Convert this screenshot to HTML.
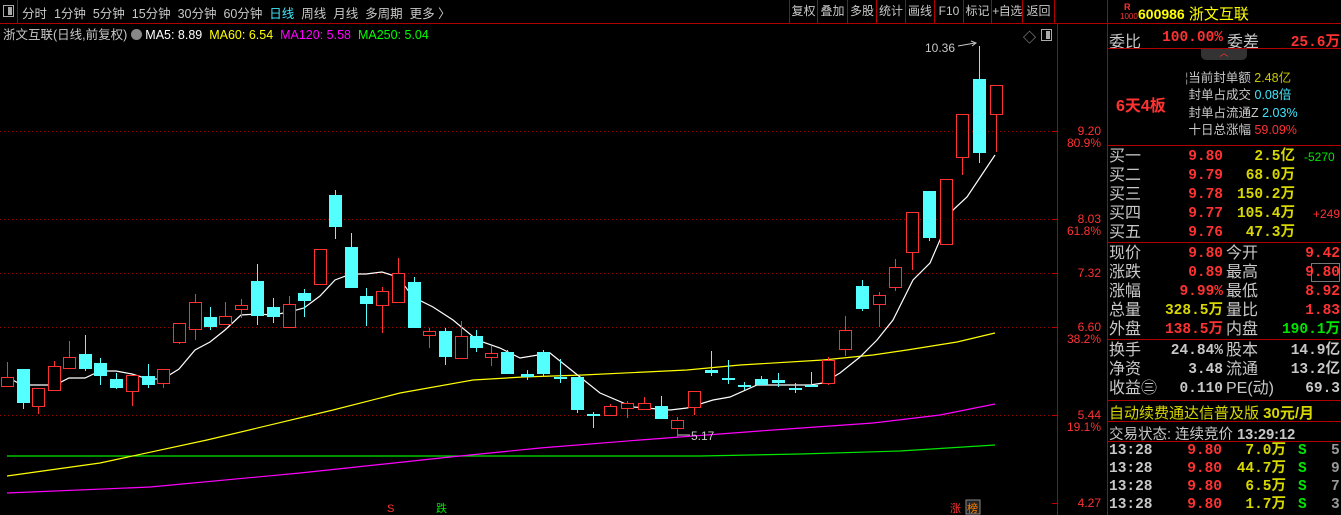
<!DOCTYPE html>
<html><head><meta charset="utf-8"><style>
*{margin:0;padding:0;box-sizing:border-box}
body{width:1341px;height:515px;background:#000;overflow:hidden;position:relative;font-family:"Liberation Sans","Noto Sans CJK SC",sans-serif;color:#c8c8c8}
.a{position:absolute;white-space:nowrap}
.tb{top:3px;font-size:12.5px;color:#c8c8c8}
.btn{position:absolute;top:0;height:23px;border-left:1px solid #b00000;font-size:12px;color:#c8c8c8;text-align:center;line-height:23px;white-space:nowrap;overflow:hidden}
.hl{position:absolute;left:1107px;width:234px;height:1px;background:#b00000}
.r{color:#ff3232}.y{color:#d8d800}.c{color:#40e8ff}.g{color:#00e600}.w{color:#c8c8c8}
.lb{font-size:16px;color:#c8c8c8}
.num{font-size:14.5px;font-weight:bold;font-family:"Liberation Mono","Noto Sans CJK SC",monospace}
.ra{text-align:right}
</style></head><body>
<div class="a" style="left:0;top:23px;width:1107px;height:1px;background:#b00000"></div>
<div class="a" style="left:17px;top:0;width:1px;height:23px;background:#b00000"></div>
<div class="a" style="left:3px;top:5px;width:11px;height:12px;border:1px solid #aaa"></div>
<div class="a" style="left:8px;top:7px;width:4px;height:8px;background:#aaa"></div>
<div class="a tb" style="left:22px">分时&nbsp;&nbsp;1分钟&nbsp;&nbsp;5分钟&nbsp;&nbsp;15分钟&nbsp;&nbsp;30分钟&nbsp;&nbsp;60分钟&nbsp;&nbsp;<span style="color:#40e8ff">日线</span>&nbsp;&nbsp;周线&nbsp;&nbsp;月线&nbsp;&nbsp;多周期&nbsp;&nbsp;更多 〉</div>
<div class="btn" style="left:789px;width:28px">复权</div>
<div class="btn" style="left:817px;width:30px">叠加</div>
<div class="btn" style="left:847px;width:29px">多股</div>
<div class="btn" style="left:876px;width:29px">统计</div>
<div class="btn" style="left:905px;width:29px">画线</div>
<div class="btn" style="left:934px;width:29px">F10</div>
<div class="btn" style="left:963px;width:28px">标记</div>
<div class="btn" style="left:991px;width:31px;letter-spacing:-0.5px">+自选</div>
<div class="btn" style="left:1022px;width:32px">返回</div>
<div class="a" style="left:1054px;top:0;width:1px;height:23px;background:#b00000"></div>
<div class="a" style="left:1107px;top:0;width:1px;height:515px;background:#b00000"></div>
<div class="a" style="left:1057px;top:24px;width:1px;height:491px;background:#b00000"></div>
<div class="a" style="left:3px;top:24px;font-size:12.5px"><span class="w">浙文互联(日线,前复权)</span> <span style="display:inline-block;width:11px;height:11px;border-radius:50%;background:#888;vertical-align:-1px"></span> <span style="color:#fff">MA5: 8.89</span>&nbsp; <span style="color:#ffff00">MA60: 6.54</span>&nbsp; <span style="color:#ff00ff">MA120: 5.58</span>&nbsp; <span style="color:#00ff00">MA250: 5.04</span></div>
<div class="a" style="left:1023px;top:27px;font-size:13px;color:#aaa">◇</div>
<div class="a" style="left:1041px;top:29px;width:11px;height:12px;border:1px solid #aaa"></div>
<div class="a" style="left:1046px;top:31px;width:4px;height:8px;background:#aaa"></div>

<svg class="a" style="left:0;top:0" width="1107" height="515" id="ch">
<g stroke="#a00000" stroke-dasharray="1,3" stroke-width="1">
<line x1="0" y1="131.5" x2="1052" y2="131.5"/><line x1="0" y1="219.5" x2="1052" y2="219.5"/><line x1="0" y1="273.5" x2="1052" y2="273.5"/><line x1="0" y1="327.5" x2="1052" y2="327.5"/><line x1="0" y1="415.5" x2="1052" y2="415.5"/>
</g>
<g stroke="#c00000"><line x1="1052" y1="131.5" x2="1057" y2="131.5"/><line x1="1052" y1="219.5" x2="1057" y2="219.5"/><line x1="1052" y1="273.5" x2="1057" y2="273.5"/><line x1="1052" y1="327.5" x2="1057" y2="327.5"/><line x1="1052" y1="415.5" x2="1057" y2="415.5"/><line x1="1052" y1="503.5" x2="1057" y2="503.5"/></g>
<g font-size="12" fill="#ff3232" text-anchor="end" font-family="Liberation Sans">
<text x="1101" y="135">9.20</text><text x="1101" y="147">80.9%</text>
<text x="1101" y="223">8.03</text><text x="1101" y="235">61.8%</text>
<text x="1101" y="277">7.32</text>
<text x="1101" y="331">6.60</text><text x="1101" y="343">38.2%</text>
<text x="1101" y="419">5.44</text><text x="1101" y="431">19.1%</text>
<text x="1101" y="507">4.27</text>
</g>
<g fill="none" stroke-width="1.2">
<polyline stroke="#00e600" points="7,456 700,456 800,454 900,451 995,445"/>
<polyline stroke="#ff00ff" points="7,493 150,487 300,473 450,457 540,448 640,440 773,430 873,423 940,415 995,404"/>
<polyline stroke="#ffff00" points="7,476 100,463 207,440 333,410 400,393 473,380 523,377 583,375 687,370 740,365 823,360 873,355 907,350 957,342 995,333"/>
<polyline stroke="#ffffff" points="7,377 22,385 37,385 55,385 69,378 85,378 100,371 116,371 132,374 148,379 163,379 179,369 195,350 210,342 225,330 241,315 257,314 273,315 289,312 304,308 320,296 335,280 351,274 366,274 382,272 398,277 413,297 433,307 453,320 477,340 500,348 520,358 550,353 580,377 600,393 633,407 670,410 687,408 713,400 730,397 757,385 790,385 810,385 823,383 840,373 860,357 877,340 893,320 913,280 930,263 953,210 967,197 995,155"/>
</g>
<g id="cd"></g>
<g font-size="12" fill="#c8c8c8" font-family="Liberation Sans">
<text x="925" y="52">10.36</text><polyline points="958,46 975,43" stroke="#c8c8c8" fill="none"/><polyline points="971,41 976,43 972,46" stroke="#c8c8c8" fill="none"/>
<text x="691" y="440">5.17</text><line x1="678" y1="435" x2="690" y2="435" stroke="#c8c8c8"/>
</g>
<g font-size="11" font-family="Liberation Sans,Noto Sans CJK SC">
<text x="387" y="512" fill="#ff3232">S</text>
<text x="436" y="512" fill="#00e600">跌</text>
<text x="950" y="512" fill="#ff3232">涨</text>
<rect x="966" y="500" width="14" height="14" fill="#222" stroke="#888"/>
<text x="967" y="512" fill="#ff8000">榜</text>
</g>
</svg>
<script>
var D=[[7,377,386,362,386,'r'],[23,369,403,369,409,'c'],[38,388,406,388,414,'r'],[54,366,390,361,390,'r'],[69,357,368,341,368,'r'],[85,354,369,335,371,'c'],[100,363,376,358,385,'c'],[116,379,388,373,389,'c'],[132,375,391,375,406,'r'],[148,376,385,364,388,'c'],[163,369,383,369,388,'r'],[179,323,342,323,344,'r'],[195,302,329,294,340,'r'],[210,317,327,307,330,'c'],[225,316,324,302,324,'r'],[241,305,309,299,318,'r'],[257,281,316,264,325,'c'],[273,307,317,298,323,'c'],[289,304,327,296,327,'r'],[304,293,301,289,317,'c'],[320,249,284,249,284,'r'],[335,195,227,190,239,'c'],[351,247,288,233,288,'c'],[366,296,304,288,326,'c'],[382,291,305,287,333,'r'],[398,273,302,258,303,'r'],[414,282,328,277,328,'c'],[429,331,335,328,348,'r'],[445,331,357,328,365,'c'],[461,336,358,321,358,'r'],[476,336,348,330,352,'c'],[491,353,357,346,366,'r'],[507,352,374,350,374,'c'],[527,374,377,370,380,'c'],[543,352,374,350,377,'c'],[560,377,379,359,383,'c'],[577,377,410,377,413,'c'],[593,414,416,412,428,'c'],[610,406,415,404,415,'r'],[627,403,408,401,418,'r'],[644,403,409,397,409,'r'],[661,406,419,396,419,'c'],[677,420,428,417,437,'r'],[694,391,407,391,415,'r'],[711,370,373,351,376,'c'],[728,378,379,360,384,'c'],[744,385,387,382,390,'c'],[761,379,385,376,385,'c'],[778,380,383,373,387,'c'],[795,388,389,383,393,'c'],[811,385,386,372,386,'c'],[828,360,383,357,385,'r'],[845,330,349,316,356,'r'],[862,286,309,280,311,'c'],[879,295,304,292,327,'r'],[895,267,287,259,291,'r'],[912,212,252,212,270,'r'],[929,191,238,191,241,'c'],[946,179,244,179,244,'r'],[962,114,157,114,175,'r'],[979,79,153,46,163,'c'],[996,85,114,85,152,'r']];
var s='';D.forEach(function(d){var x=d[0],t=d[1],b=d[2],h=d[3],l=d[4];if(b-t<2)b=t+2;
if(d[5]=='r'){s+='<line x1="'+x+'.5" y1="'+h+'" x2="'+x+'.5" y2="'+t+'" stroke="#ff3232"/><line x1="'+x+'.5" y1="'+b+'" x2="'+x+'.5" y2="'+l+'" stroke="#ff3232"/><rect x="'+(x-5.5)+'" y="'+(t+.5)+'" width="12" height="'+(b-t)+'" fill="#000" stroke="#ff3232"/>';}
else{s+='<line x1="'+x+'.5" y1="'+h+'" x2="'+x+'.5" y2="'+l+'" stroke="#54ffff"/><rect x="'+(x-6)+'" y="'+t+'" width="13" height="'+(b-t)+'" fill="#54ffff"/>';}});
document.getElementById('cd').innerHTML=s;
</script>

<div class="a" style="left:1124px;top:2px;font-size:9px;color:#ff3232;font-weight:bold">R</div>
<div class="a" style="left:1120px;top:12px;font-size:8px;color:#ff3232">1000</div>
<div class="a" style="left:1138px;top:3px;font-size:15px;color:#ffff00"><b style="font-size:14px">600986</b> 浙文互联</div>
<div class="hl" style="top:23px"></div>
<div class="a lb" style="left:1109px;top:28px">委比</div>
<div class="a num r" style="left:1150px;top:30px;width:73px;text-align:right">100.00%</div>
<div class="a lb" style="left:1227px;top:28px">委差</div>
<div class="a num r" style="left:1270px;top:30px;width:70px;text-align:right">25.6万</div>
<div class="hl" style="top:48px"></div>
<div class="a" style="left:1201px;top:49px;width:46px;height:11px;background:#333;border-radius:0 0 5px 5px;color:#ff3232;font-size:9px;text-align:center;line-height:9px">︿</div>
<div class="a r" style="left:1116px;top:92px;font-size:16px;font-weight:bold">6天4板</div>
<div class="a" style="left:1185px;top:70px;font-size:12.5px;line-height:17.3px">
<span style="color:#888">¦</span><span class="w">当前封单额</span> <span style="color:#c8c800">2.48亿</span><br>
&nbsp;<span class="w">封单占成交</span> <span class="c">0.08倍</span><br>
&nbsp;<span class="w">封单占流通Z</span> <span class="c">2.03%</span><br>
&nbsp;<span class="w">十日总涨幅</span> <span class="r">59.09%</span></div>
<div class="hl" style="top:145px"></div>

<div class="a lb" style="left:1109px;top:147px;line-height:19px">买一<br>买二<br>买三<br>买四<br>买五</div>
<div class="a num r ra" style="left:1160px;top:148px;width:63px;line-height:19px">9.80<br>9.79<br>9.78<br>9.77<br>9.76</div>
<div class="a num y ra" style="left:1225px;top:148px;width:70px;line-height:19px">2.5亿<br>68.0万<br>150.2万<br>105.4万<br>47.3万</div>
<div class="a g" style="left:1304px;top:150px;font-size:12px">-5270</div>
<div class="a r" style="left:1313px;top:207px;font-size:12px">+249</div>
<div class="hl" style="top:242px"></div>

<div class="a lb" style="left:1109px;top:244px;line-height:19px">现价<br>涨跌<br>涨幅<br>总量<br>外盘</div>
<div class="a num ra" style="left:1140px;top:245px;width:83px;line-height:19px"><span class="r">9.80</span><br><span class="r">0.89</span><br><span class="r">9.99%</span><br><span class="y">328.5万</span><br><span class="r">138.5万</span></div>
<div class="a lb" style="left:1226px;top:244px;line-height:19px">今开<br>最高<br>最低<br>量比<br>内盘</div>
<div class="a num ra" style="left:1260px;top:245px;width:80px;line-height:19px"><span class="r">9.42</span><br><span class="r">9.80</span><br><span class="r">8.92</span><br><span class="r">1.83</span><br><span class="g">190.1万</span></div>
<div class="a" style="left:1311px;top:263px;width:29px;height:19px;border:1px solid #777"></div>
<div class="hl" style="top:339px"></div>
<div class="a lb" style="left:1109px;top:341px;line-height:19px">换手<br>净资<br>收益㊂</div>
<div class="a num w ra" style="left:1140px;top:342px;width:83px;line-height:19px">24.84%<br>3.48<br>0.110</div>
<div class="a lb" style="left:1226px;top:341px;line-height:19px">股本<br>流通<br>PE(动)</div>
<div class="a num w ra" style="left:1260px;top:342px;width:80px;line-height:19px">14.9亿<br>13.2亿<br>69.3</div>
<div class="hl" style="top:400px"></div>
<div class="a y" style="left:1109px;top:402px;font-size:15px">自动续费通达信普及版 <b>30元/月</b></div>
<div class="hl" style="top:421px"></div>
<div class="a w" style="left:1109px;top:423px;font-size:14.5px">交易状态: 连续竞价 <b>13:29:12</b></div>
<div class="hl" style="top:441px"></div>
<div class="a num w" style="left:1109px;top:442px;line-height:18px">13:28<br>13:28<br>13:28<br>13:28</div>
<div class="a num r ra" style="left:1160px;top:442px;width:62px;line-height:18px">9.80<br>9.80<br>9.80<br>9.80</div>
<div class="a num y ra" style="left:1225px;top:442px;width:61px;line-height:18px">7.0万<br>44.7万<br>6.5万<br>1.7万</div>
<div class="a num g" style="left:1298px;top:442px;line-height:18px">S<br>S<br>S<br>S</div>
<div class="a num" style="left:1331px;top:442px;line-height:18px;color:#999">5<br>9<br>7<br>3</div>
</body></html>
